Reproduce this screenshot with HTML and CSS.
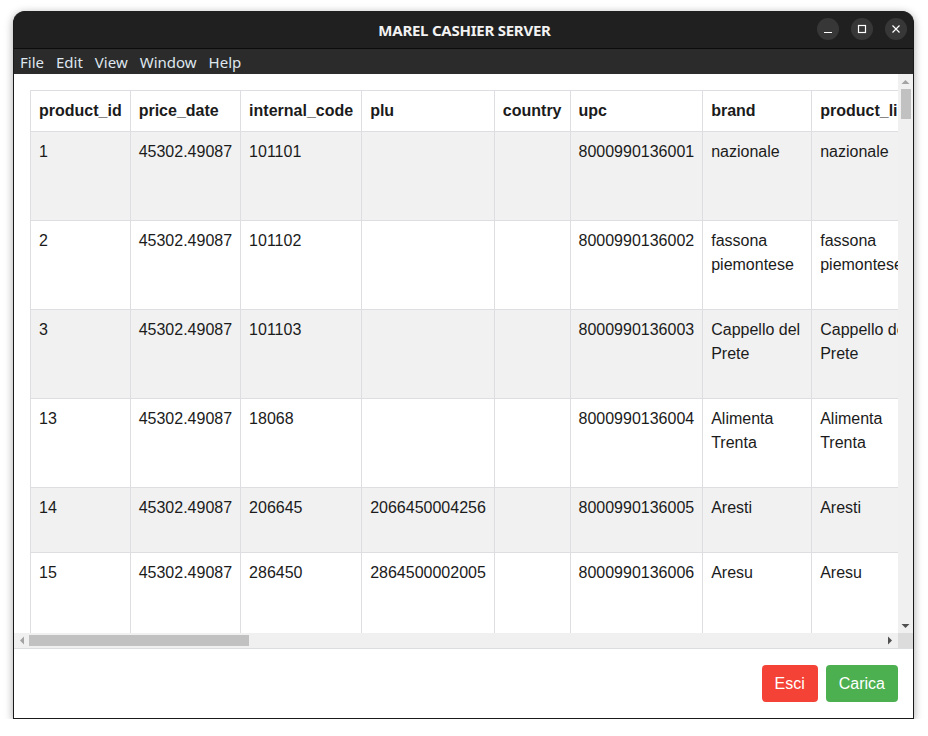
FILE: index.html
```html
<!DOCTYPE html>
<html>
<head>
<meta charset="utf-8">
<title>MAREL CASHIER SERVER</title>
<link rel="stylesheet" href="styles.css">
</head>
<body>
<div class="window">
  <header class="titlebar">
    <div class="title">MAREL CASHIER SERVER</div>
    <div class="controls">
      <span class="ctl"><svg width="10" height="10" viewBox="0 0 10 10"><path d="M1 8.5h8" stroke="#fff" stroke-width="1.2"/></svg></span>
      <span class="ctl"><svg width="10" height="10" viewBox="0 0 10 10"><rect x="1.5" y="1.5" width="7" height="7" fill="none" stroke="#fff" stroke-width="1.2"/></svg></span>
      <span class="ctl"><svg width="10" height="10" viewBox="0 0 10 10"><path d="M1.5 1.5l7 7M8.5 1.5l-7 7" stroke="#fff" stroke-width="1.2"/></svg></span>
    </div>
  </header>
  <nav class="menubar">
    <span>File</span><span>Edit</span><span>View</span><span>Window</span><span>Help</span>
  </nav>
  <main class="content">
    <div class="scroller">
      <div class="viewport">
        <table class="grid">
          <thead>
            <tr>
              <th>product_id</th><th>price_date</th><th>internal_code</th><th>plu</th><th>country</th><th>upc</th><th class="w92">brand</th><th class="w92">product_line</th><th>description</th><th>category</th><th>unit</th>
            </tr>
          </thead>
          <tbody>
            <tr class="h3"><td>1</td><td>45302.49087</td><td>101101</td><td></td><td></td><td>8000990136001</td><td class="w92">nazionale</td><td class="w92">nazionale</td><td>carne</td><td>1</td><td>kg</td></tr>
            <tr class="h3"><td>2</td><td>45302.49087</td><td>101102</td><td></td><td></td><td>8000990136002</td><td class="w92">fassona piemontese</td><td class="w92">fassona piemontese</td><td>carne</td><td>1</td><td>kg</td></tr>
            <tr class="h3"><td>3</td><td>45302.49087</td><td>101103</td><td></td><td></td><td>8000990136003</td><td class="w92">Cappello del Prete</td><td class="w92">Cappello del Prete</td><td>salumi</td><td>2</td><td>kg</td></tr>
            <tr class="h3"><td>13</td><td>45302.49087</td><td>18068</td><td></td><td></td><td>8000990136004</td><td class="w92">Alimenta Trenta</td><td class="w92">Alimenta Trenta</td><td>salumi</td><td>2</td><td>kg</td></tr>
            <tr class="h2"><td>14</td><td>45302.49087</td><td>206645</td><td>2066450004256</td><td></td><td>8000990136005</td><td class="w92">Aresti</td><td class="w92">Aresti</td><td>formaggi</td><td>3</td><td>kg</td></tr>
            <tr class="h3"><td>15</td><td>45302.49087</td><td>286450</td><td>2864500002005</td><td></td><td>8000990136006</td><td class="w92">Aresu</td><td class="w92">Aresu</td><td>formaggi</td><td>3</td><td>kg</td></tr>
            <tr class="h3"><td>16</td><td>45302.49087</td><td>286451</td><td></td><td></td><td>8000990136007</td><td class="w92">Aresu</td><td class="w92">Aresu</td><td>formaggi</td><td>3</td><td>kg</td></tr>
          </tbody>
        </table>
      </div>
      <div class="vbar">
        <svg class="arrow" width="9" height="6" viewBox="0 0 9 6"><path d="M0.5 5L4.5 1L8.5 5Z" fill="#a3a3a3"/></svg>
        <div class="vthumb"></div>
        <div class="spacer"></div>
        <svg class="arrow" width="9" height="6" viewBox="0 0 9 6"><path d="M0.5 1L4.5 5L8.5 1Z" fill="#505050"/></svg>
      </div>
      <div class="hbar">
        <svg class="arrow" width="6" height="9" viewBox="0 0 6 9"><path d="M5 0.5L1 4.5L5 8.5Z" fill="#a3a3a3"/></svg>
        <div class="hthumb"></div>
        <div class="spacer"></div>
        <svg class="arrow" width="6" height="9" viewBox="0 0 6 9"><path d="M1 0.5L5 4.5L1 8.5Z" fill="#505050"/></svg>
      </div>
      <div class="corner"></div>
    </div>
    <footer class="actions">
      <button class="btn btn-red">Esci</button>
      <button class="btn btn-green">Carica</button>
    </footer>
  </main>
</div>
</body>
</html>
```

FILE: styles.css
```css
html, body {
  margin: 0;
  padding: 0;
  background: #ffffff;
}
body {
  padding: 11px 0 0 13px;
}
.window {
  width: 901px;
  height: 708px;
  box-sizing: border-box;
  border-radius: 12px 12px 0 0;
  background: #202020;
  border: 1px solid #1a1a1a;
  border-top: none;
  box-shadow: 0 2px 8px rgba(0, 0, 0, 0.35);
  display: flex;
  flex-direction: column;
  overflow: hidden;
}
.titlebar {
  height: 37px;
  flex: none;
  background: #202020;
  border-bottom: 1px solid #0c0c0c;
  display: flex;
  align-items: center;
  justify-content: center;
  position: relative;
  border-radius: 12px 12px 0 0;
}
.title {
  font-family: "Noto Sans", sans-serif;
  font-weight: 700;
  font-size: 15px;
  color: #f2f2f2;
  letter-spacing: -0.25px;
  padding-left: 2px;
}
.controls {
  position: absolute;
  right: 6px;
  top: 7px;
  display: flex;
  gap: 12px;
}
.ctl {
  width: 22px;
  height: 22px;
  border-radius: 50%;
  background: #373737;
  display: flex;
  align-items: center;
  justify-content: center;
}
.menubar {
  height: 25px;
  flex: none;
  background: #2b2b2b;
  display: flex;
  align-items: center;
  gap: 12px;
  padding-left: 6px;
  font-family: "Noto Sans", sans-serif;
  font-size: 15px;
  color: #dfe6ee;
}
.content {
  flex: 1;
  background: #ffffff;
  display: flex;
  flex-direction: column;
  min-height: 0;
}
.scroller {
  height: 574px;
  flex: none;
  display: grid;
  grid-template-columns: 1fr 15px;
  grid-template-rows: 1fr 15px;
  border-bottom: 1px solid #dcdde1;
}
.viewport {
  overflow: hidden;
  min-width: 0;
  min-height: 0;
  padding: 16px 0 0 16px;
}
.grid {
  border-collapse: collapse;
  width: max-content;
  font-family: "Liberation Sans", Arial, sans-serif;
  font-size: 16px;
  line-height: 24px;
  color: #1b1b1b;
}
.grid th, .grid td {
  border: 1px solid #dddde2;
  padding: 8px;
  text-align: left;
  vertical-align: top;
}
.grid th {
  font-weight: 700;
  background: #ffffff;
  white-space: nowrap;
}
.grid td {
  white-space: nowrap;
}
.grid td.w92 {
  white-space: normal;
}
.grid .w92 {
  width: 92px;
  min-width: 92px;
  max-width: 92px;
  overflow: hidden;
}
.grid tbody tr:nth-child(odd) td {
  background: #f1f1f1;
}
.grid tr.h3 td {
  height: 72px;
}
.grid tr.h2 td {
  height: 48px;
}
.vbar {
  background: #f0f0f0;
  display: flex;
  flex-direction: column;
  align-items: center;
  padding: 5px 0 4px;
}
.vthumb {
  width: 10px;
  height: 30px;
  background: #c1c1c1;
  margin-top: 4px;
}
.vbar .spacer, .hbar .spacer {
  flex: 1;
}
.hbar {
  background: #f0f0f0;
  display: flex;
  align-items: center;
  padding: 0 5px 0 5px;
}
.hthumb {
  width: 220px;
  height: 11px;
  background: #c1c1c1;
  margin-left: 4px;
}
.corner {
  background: #dcdcdc;
}
.actions {
  flex: 1;
  display: flex;
  justify-content: flex-end;
  align-items: flex-start;
  gap: 8px;
  padding: 16px 15px 0 0;
}
.btn {
  border: none;
  border-radius: 4px;
  color: #ffffff;
  font-family: "Liberation Sans", Arial, sans-serif;
  font-size: 16px;
  line-height: 21px;
  padding: 8px 13px;
  height: 37px;
}
.btn-red {
  background: #f44336;
}
.btn-green {
  background: #4caf50;
}
```
